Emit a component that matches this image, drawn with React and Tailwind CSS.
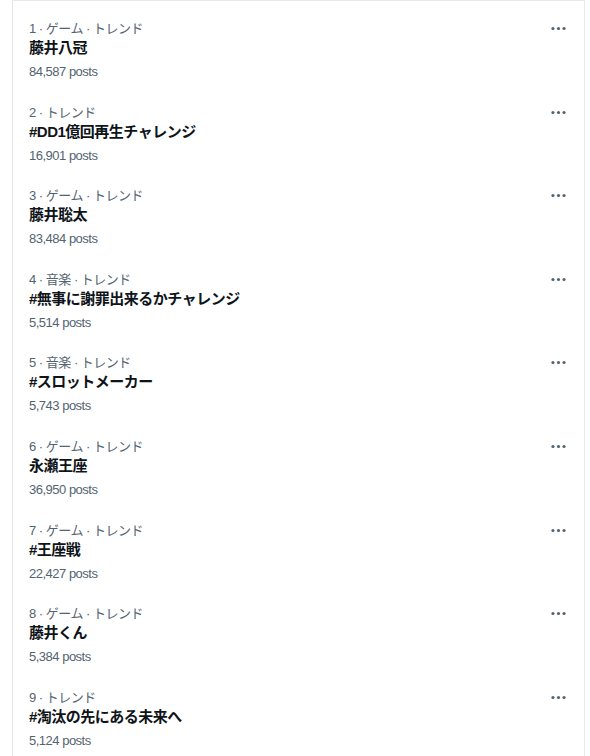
import React from 'react';

const trends = [
  { rank: 1, category: 'ゲーム · トレンド', title: '藤井八冠', posts: '84,587' },
  { rank: 2, category: 'トレンド', title: '#DD1億回再生チャレンジ', posts: '16,901' },
  { rank: 3, category: 'ゲーム · トレンド', title: '藤井聡太', posts: '83,484' },
  { rank: 4, category: '音楽 · トレンド', title: '#無事に謝罪出来るかチャレンジ', posts: '5,514' },
  { rank: 5, category: '音楽 · トレンド', title: '#スロットメーカー', posts: '5,743' },
  { rank: 6, category: 'ゲーム · トレンド', title: '永瀬王座', posts: '36,950' },
  { rank: 7, category: 'ゲーム · トレンド', title: '#王座戦', posts: '22,427' },
  { rank: 8, category: 'ゲーム · トレンド', title: '藤井くん', posts: '5,384' },
  { rank: 9, category: 'トレンド', title: '#淘汰の先にある未来へ', posts: '5,124' },
];

const MoreIcon = () => (
  <svg viewBox="0 0 24 24" className="w-[19px] h-[19px] fill-[#536471]">
    <circle cx="5" cy="12" r="2" />
    <circle cx="12" cy="12" r="2" />
    <circle cx="19" cy="12" r="2" />
  </svg>
);

const TrendItem = ({ trend }) => (
  <div className="flex items-start justify-between pl-4 pr-[16px] pt-3 pb-[12.6px]">
    <div className="flex flex-col">
      <span className="text-[13px] leading-4 text-[#536471] tracking-[-0.5px]">
        {trend.rank} · {trend.category}
      </span>
      <span className="mt-[1px] text-[15px] leading-5 font-bold text-[#0f1419] tracking-[-0.5px]">
        {trend.title}
      </span>
      <span className="mt-[6px] text-[13px] leading-4 text-[#536471] tracking-[-0.5px]">
        {trend.posts} posts
      </span>
    </div>
    <div className="mt-[-2px]">
      <MoreIcon />
    </div>
  </div>
);

export default function App() {
  return (
    <div
      className="min-h-screen bg-white"
      style={{ fontFamily: '"Liberation Sans", "Noto Sans CJK JP", sans-serif' }}
    >
      <div className="ml-3 w-[573px] min-h-[756px] border-x border-t border-[#e6e9ea] pt-2">
        {trends.map((t) => (
          <TrendItem key={t.rank} trend={t} />
        ))}
      </div>
    </div>
  );
}
